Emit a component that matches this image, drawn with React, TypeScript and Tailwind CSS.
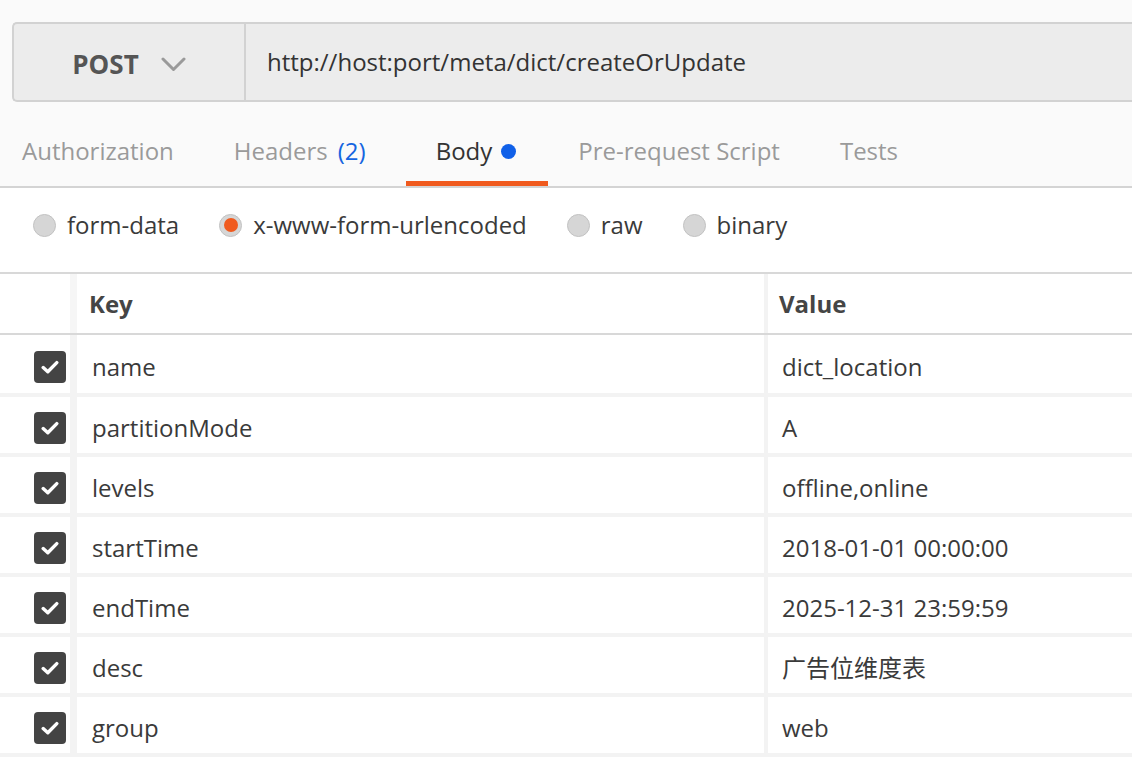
import React from "react";

const rows = [
  { key: "name", value: "dict_location" },
  { key: "partitionMode", value: "A" },
  { key: "levels", value: "offline,online" },
  { key: "startTime", value: "2018-01-01 00:00:00" },
  { key: "endTime", value: "2025-12-31 23:59:59" },
  { key: "desc", value: "广告位维度表" },
  { key: "group", value: "web" },
];

const Radio = ({ label, checked }: { label: string; checked?: boolean }) => (
  <div className="flex items-center gap-[11px]">
    <span className="flex h-[23px] w-[23px] items-center justify-center rounded-full border border-[#c2c2c2] bg-[#d6d6d6]">
      {checked && <span className="h-[14px] w-[14px] rounded-full bg-[#f05a1e]" />}
    </span>
    <span className="text-[24px] text-[#3a3a3a]">{label}</span>
  </div>
);

const Checkbox = () => (
  <span className="flex h-[32px] w-[32px] items-center justify-center rounded-[4px] bg-[#444444]">
    <svg width="18" height="14" viewBox="0 0 18 14" fill="none">
      <path d="M2.2 7.6 L6.8 11.8 L15.8 2.6" stroke="white" strokeWidth="3.4" strokeLinecap="round" strokeLinejoin="round" />
    </svg>
  </span>
);

const App = () => {
  return (
    <div className="h-[762px] w-[1132px] overflow-hidden bg-white font-['Open_Sans','Noto_Sans_CJK_SC',sans-serif]">
      <div className="bg-[#fafafa] pt-[22px]">
        <div className="ml-3 flex h-[80px] rounded-l-[5px] border-2 border-r-0 border-[#d2d2d2] bg-[#ececec]">
          <div className="flex w-[232px] shrink-0 items-center justify-center gap-[22px] border-r-2 border-[#d2d2d2] pt-1">
            <span className="text-[26px] font-bold text-[#555555]">POST</span>
            <svg width="25" height="15" viewBox="0 0 25 15" fill="none">
              <path d="M2 2 L12.5 12.5 L23 2" stroke="#9a9a9a" strokeWidth="3" strokeLinecap="round" strokeLinejoin="round" />
            </svg>
          </div>
          <div className="flex items-center pl-[21px] text-[24px] text-[#333333]">
            http://host:port/meta/dict/createOrUpdate
          </div>
        </div>
        <div className="-ml-2 flex h-[86px] border-b-2 border-[#d4d4d4] text-[24px]">
          <div className="flex items-center px-[30px] pt-[14px] text-[#9a9a9a]">Authorization</div>
          <div className="flex items-center px-[30px] pt-[14px] text-[#9a9a9a]">
            Headers <span className="ml-[10px] text-[#1565e0]">(2)</span>
          </div>
          <div className="ml-[10px] flex flex-col">
            <div className="flex flex-1 items-center gap-[9px] pl-[30px] pr-[32px] pt-[19px] text-[#333333]">
              Body <span className="h-[15px] w-[15px] rounded-full bg-[#1060e8]" />
            </div>
            <div className="h-[5px] bg-[#f05a1e]" />
          </div>
          <div className="flex items-center px-[30px] pt-[14px] text-[#9a9a9a]">Pre-request Script</div>
          <div className="flex items-center px-[30px] pt-[14px] text-[#9a9a9a]">Tests</div>
        </div>
      </div>

      <div className="flex h-[84px] items-center gap-[40px] pb-[10px] pl-[33px]">
        <Radio label="form-data" />
        <Radio label="x-www-form-urlencoded" checked />
        <Radio label="raw" />
        <Radio label="binary" />
      </div>

      <div className="border-t-2 border-[#d8d8d8]">
        <div className="flex h-[61px] border-b-2 border-[#d8d8d8] text-[24px] font-bold text-[#454545]">
          <div className="w-[70px] shrink-0" />
          <div className="w-[7px] shrink-0 bg-[#f6f6f6]" />
          <div className="flex w-[687px] shrink-0 items-center pl-[12px]">Key</div>
          <div className="w-[4px] shrink-0 bg-[#f3f3f3]" />
          <div className="flex items-center pl-[11px]">Value</div>
        </div>
        {rows.map((r, i) => (
          <div
            key={r.key}
            className={`flex border-b-4 border-[#f3f3f3] pt-[5px] text-[24px] text-[#3a3a3a] ${i === 0 ? "h-[62px]" : "h-[60px]"}`}
          >
            <div className="flex w-[70px] shrink-0 items-center justify-end pr-[4px]">
              <Checkbox />
            </div>
            <div className="-mt-[5px] w-[7px] shrink-0 bg-[#f3f3f3]" />
            <div className="flex w-[687px] shrink-0 items-center pl-[15px]">{r.key}</div>
            <div className="-mt-[5px] w-[4px] shrink-0 bg-[#f3f3f3]" />
            <div className="flex items-center pl-[14px]">{r.value}</div>
          </div>
        ))}
      </div>
    </div>
  );
};

export default App;
